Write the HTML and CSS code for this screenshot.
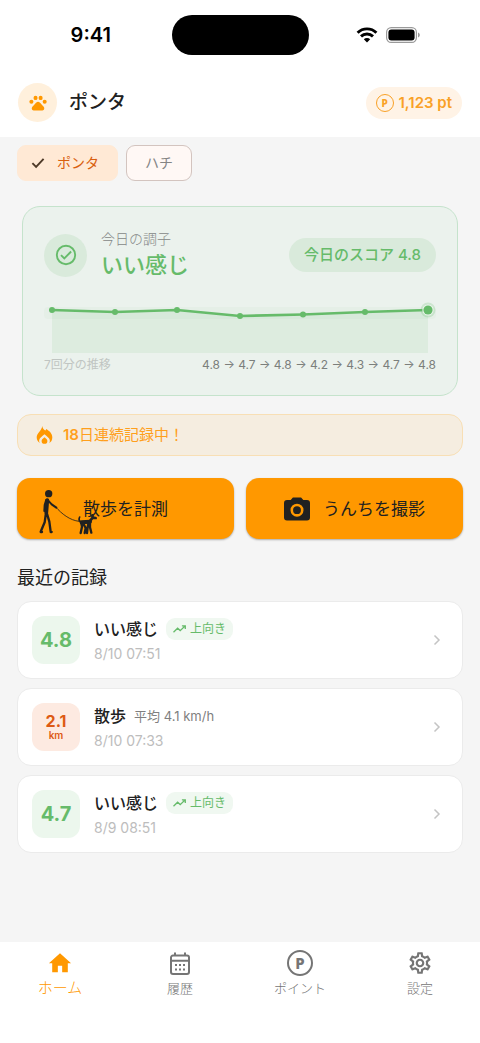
FILE: index.html
```html
<!DOCTYPE html>
<html lang="ja">
<head>
<meta charset="utf-8">
<meta name="viewport" content="width=device-width, initial-scale=1">
<title>ポンタ</title>
<link rel="stylesheet" href="styles.css">
</head>
<body>
<div class="status">
  <span class="status-time">9:41</span>
  <span class="island"></span>
  <span class="status-icons">
    <svg width="22" height="16" viewBox="0 0 22 16" aria-hidden="true">
      <g fill="none" stroke="#000" stroke-width="2.9">
        <path d="M1.6 5.7a13.4 13.4 0 0 1 18.8 0"/>
        <path d="M5 9.4a8.6 8.6 0 0 1 12 0"/>
      </g>
      <path d="M11 15.4l-3.2-3.2a4.6 4.6 0 0 1 6.4 0z"/>
    </svg>
    <svg width="34" height="16" viewBox="0 0 34 16" aria-hidden="true">
      <rect x=".6" y=".6" width="29.8" height="14.8" rx="4.6" fill="none" stroke="#9a9a9a" stroke-width="1.2"/>
      <rect x="2.4" y="2.4" width="26.2" height="11.2" rx="3"/>
      <path d="M32 5.6c2.4.8 2.4 4 0 4.8z" fill="#9a9a9a"/>
    </svg>
  </span>
</div>

<header class="header">
  <span class="avatar">
    <svg width="18" height="18" viewBox="0 0 24 24" fill="#ff9800" aria-hidden="true">
      <ellipse cx="3.2" cy="10.400" rx="2.7" ry="2.7"/><ellipse cx="8.700" cy="5.2" rx="2.7" ry="2.9"/>
      <ellipse cx="15.500" cy="5.2" rx="2.7" ry="2.9"/><ellipse cx="20.900" cy="10.400" rx="2.7" ry="2.7"/>
      <path d="M18 15.200c-1-1.100-1.900-2-2.900-3.100-.5-.6-1.100-1.100-1.800-1.400a3.500 3.500 0 0 0-2.500 0c-.7.3-1.300.8-1.800 1.400-1 1.100-1.900 2-2.900 3.100-1.400 1.400-2.700 2.600-2.400 4.500.3 1.400 1.200 2.300 2.500 2.300h11.600c1.300 0 2.200-.9 2.500-2.300.4-2-.9-3.100-2.300-4.500z"/>
    </svg>
  </span>
  <h1 class="title">ポンタ</h1>
  <a class="points" href="#points"><span class="coin">P</span>1,123 pt</a>
</header>

<main class="main">
  <div class="chips">
    <button class="chip chip-on" type="button" aria-pressed="true">
      <svg width="14" height="12" viewBox="0 0 14 12" fill="none" stroke="#4e3a28" stroke-width="1.900" aria-hidden="true"><path d="M1.400 6.200l3.700 3.700 7.500-8"/></svg>
      ポンタ
    </button>
    <button class="chip" type="button" aria-pressed="false">ハチ</button>
  </div>

  <section class="condition">
    <div class="condition-top">
      <span class="check">
        <svg width="24" height="24" viewBox="0 0 24 24" fill="none" stroke="#66bb6a" stroke-width="1.900" aria-hidden="true"><circle cx="12" cy="12" r="9.200"/><path d="M7 12.200l3.300 3.300 6.800-7"/></svg>
      </span>
      <div class="condition-text">
        <p class="condition-label">今日の調子</p>
        <p class="condition-value">いい感じ</p>
      </div>
      <span class="score">今日のスコア 4.8</span>
    </div>
    <svg class="chart" viewBox="0 0 392 52" role="img" aria-label="7回分の推移">
      <rect x="0" y="6" width="392" height="12" rx="4" fill="#66bb6a" opacity=".04"/>
      <path d="M8 9L71 11 133 9 196 15 259 13.500 321 11 384 9V52H8z" fill="#66bb6a" opacity=".1"/>
      <path d="M8 9L71 11 133 9 196 15 259 13.500 321 11 384 9" fill="none" stroke="#66bb6a" stroke-width="2.600"/>
      <circle cx="384" cy="9" r="7.500" fill="#66bb6a" opacity=".22"/>
      <circle cx="384" cy="9" r="5.600" fill="#ecf5ed"/>
      <g fill="#66bb6a">
        <circle cx="8" cy="9" r="3"/><circle cx="71" cy="11" r="3"/><circle cx="133" cy="9" r="3"/>
        <circle cx="196" cy="15" r="3"/><circle cx="259" cy="13.500" r="3"/><circle cx="321" cy="11" r="3"/>
        <circle cx="384" cy="9" r="4.600"/>
      </g>
    </svg>
    <div class="chart-legend">
      <span class="legend-name">7回分の推移</span>
      <span class="legend-values">4.8 → 4.7 → 4.8 → 4.2 → 4.3 → 4.7 → 4.8</span>
    </div>
  </section>

  <p class="streak">
    <svg width="17" height="18" viewBox="0 0 17 18" aria-hidden="true">
      <path fill="#ff9800" fill-rule="evenodd" d="M6.300 0c.2 2.200 1.400 3.300 3 4.600.5-.5.7-1 .8-1.700 3.600 2 6.200 4.800 6.200 8.400 0 3.200-1.200 4.700-3 5.700.5-.9.7-1.900.5-3-.4-2-2.800-3.700-5.300-5.800-2.600 2.200-4.900 3.800-5.300 5.800-.2 1.200.1 2.200.7 3C2.100 16 .7 14.300.7 11.600.7 7 5.500 5 6.300 0z"/>
      <path fill="#ff9800" d="M8.500 11.200c1.600 1.300 2.900 2.100 2.900 3.700a2.900 2.900 0 0 1-5.800 0c0-1.600 1.300-2.400 2.900-3.700z"/>
    </svg>
    <span><b class="streak-days">18</b>日連続記録中！</span>
  </p>

  <div class="actions">
    <button class="action" type="button">
      <svg class="walker" width="62" height="48" viewBox="25 25 186 144" fill="none" stroke="#212121" stroke-linecap="round" stroke-linejoin="round" aria-hidden="true">
        <circle cx="57" cy="42" r="11" fill="#212121" stroke="none"/>
        <path stroke-width="11" d="M53 61L50 99"/>
        <path stroke-width="6" d="M50 60L45 76 44 94M55 62L66 74 80 84"/>
        <path stroke-width="7" d="M49 99L45 128 33 156M51 99L59 126 63 156M33 157h4M63 157h3"/>
        <path stroke-width="2.500" d="M79 83C96 102 120 122 148 125"/>
        <path stroke-width="12" d="M156 128L181 126"/>
        <path stroke-width="5" d="M153 127C146 122 148 116 150 112"/>
        <path stroke-width="8" d="M180 125L189 114 198 115M189 113l-1-6"/>
        <path stroke-width="7" d="M155 130L157 141 153 160M160 130L168 145 165 160M177 128L174 142 172 160M181 128L181 143 185 159"/>
      </svg>
      散歩を計測
    </button>
    <button class="action" type="button">
      <svg width="26" height="24" viewBox="0 0 26 24" aria-hidden="true">
        <path fill="#212121" d="M8.900 0.500h8.200l2.200 2.500H23a3 3 0 0 1 3 3v14.500a3 3 0 0 1-3 3H3a3 3 0 0 1-3-3V6a3 3 0 0 1 3-3h3.700z"/>
        <circle cx="13" cy="13.200" r="5.200" fill="none" stroke="#ff9800" stroke-width="2.600"/>
      </svg>
      うんちを撮影
    </button>
  </div>

  <h2 class="section-title">最近の記録</h2>
  <div class="records">
    <a class="record" href="#r1">
      <span class="badge">4.8</span>
      <span class="record-body">
        <span class="record-head"><span class="record-name">いい感じ</span>
          <span class="trend"><svg width="13" height="8" viewBox="0 0 13 8" fill="none" stroke="#66bb6a" stroke-width="1.300" aria-hidden="true"><path d="M.5 7.200L4.600 3.200 7.200 5.600 12 1M8.900.8h3.400v3.300"/></svg>上向き</span></span>
        <time class="record-time">8/10 07:51</time>
      </span>
      <svg class="chevron" width="8" height="12" viewBox="0 0 8 12" aria-hidden="true"><path d="M1.500 1.500L6 6 1.500 10.500"/></svg>
    </a>
    <a class="record" href="#r2">
      <span class="badge badge-walk"><span>2.1</span><small class="unit">km</small></span>
      <span class="record-body">
        <span class="record-head"><span class="record-name">散歩</span><span class="pace">平均 4.1 km/h</span></span>
        <time class="record-time">8/10 07:33</time>
      </span>
      <svg class="chevron" width="8" height="12" viewBox="0 0 8 12" aria-hidden="true"><path d="M1.500 1.500L6 6 1.500 10.500"/></svg>
    </a>
    <a class="record" href="#r3">
      <span class="badge">4.7</span>
      <span class="record-body">
        <span class="record-head"><span class="record-name">いい感じ</span>
          <span class="trend"><svg width="13" height="8" viewBox="0 0 13 8" fill="none" stroke="#66bb6a" stroke-width="1.300" aria-hidden="true"><path d="M.5 7.200L4.600 3.200 7.200 5.600 12 1M8.900.8h3.400v3.300"/></svg>上向き</span></span>
        <time class="record-time">8/9 08:51</time>
      </span>
      <svg class="chevron" width="8" height="12" viewBox="0 0 8 12" aria-hidden="true"><path d="M1.500 1.500L6 6 1.500 10.500"/></svg>
    </a>
  </div>
</main>

<nav class="nav">
  <a class="tab tab-on" href="#home" aria-current="page">
    <span class="tab-icon"><svg width="26" height="26" viewBox="0 0 24 24" fill="#ff9800" aria-hidden="true"><path d="M10 20.500v-6h4v6h5.200V12.300h3L12 3 1.800 12.300h3v8.200z"/></svg></span>
    ホーム
  </a>
  <a class="tab" href="#history">
    <span class="tab-icon"><svg width="20" height="23" viewBox="0 0 20 23" aria-hidden="true"><path fill="none" stroke="#757575" stroke-width="2" d="M3 3.500h14a2 2 0 0 1 2 2V20a2 2 0 0 1-2 2H3a2 2 0 0 1-2-2V5.500a2 2 0 0 1 2-2zM1 8.700h18M5 .500v4M15 .500v4"/><path fill="#757575" d="M5 12h2v2H5zM9 12h2v2H9zM13 12h2v2h-2zM5 16.500h2v2H5zM9 16.500h2v2H9zM13 16.500h2v2h-2z"/></svg></span>
    履歴
  </a>
  <a class="tab" href="#points">
    <span class="tab-icon"><span class="coin coin-large">P</span></span>
    ポイント
  </a>
  <a class="tab" href="#settings">
    <span class="tab-icon"><svg width="26" height="26" viewBox="0 0 24 24" fill="#757575" aria-hidden="true"><path d="M19.430 12.980c.04-.32.07-.64.07-.98 0-.34-.03-.66-.07-.98l2.110-1.650c.19-.15.24-.42.12-.64l-2-3.460c-.09-.16-.26-.25-.44-.25-.06 0-.12.01-.17.03l-2.490 1c-.52-.4-1.080-.73-1.690-.98l-.38-2.650A.488.488 0 0 0 14 2h-4c-.25 0-.46.18-.49.42l-.38 2.650c-.61.25-1.170.59-1.690.98l-2.490-1a.566.566 0 0 0-.18-.03c-.17 0-.34.09-.43.25l-2 3.460c-.13.22-.07.49.12.64l2.110 1.650c-.04.32-.07.65-.07.98 0 .33.03.66.07.98l-2.110 1.650c-.19.15-.24.42-.12.64l2 3.460c.09.16.26.25.44.25.06 0 .12-.01.17-.03l2.490-1c.52.4 1.080.73 1.690.98l.38 2.650c.03.24.24.42.49.42h4c.25 0 .46-.18.49-.42l.38-2.650c.61-.25 1.170-.59 1.690-.98l2.490 1c.06.02.12.03.18.03.17 0 .34-.09.43-.25l2-3.460c.12-.22.07-.49-.12-.64l-2.110-1.650zm-1.980-1.710c.04.31.05.52.05.73 0 .21-.02.43-.05.73l-.14 1.130.89.7 1.080.84-.7 1.210-1.270-.51-1.040-.42-.9.680c-.43.32-.84.56-1.250.73l-1.060.43-.16 1.130-.2 1.350h-1.400l-.19-1.350-.16-1.130-1.060-.43c-.43-.18-.83-.41-1.230-.71l-.91-.7-1.060.43-1.270.51-.7-1.210 1.080-.84.89-.7-.14-1.130c-.03-.31-.05-.54-.05-.74s.02-.43.05-.73l.14-1.130-.89-.7-1.080-.84.7-1.210 1.270.51 1.040.42.9-.68c.43-.32.84-.56 1.250-.73l1.060-.43.16-1.130.2-1.350h1.390l.19 1.350.16 1.130 1.060.43c.43.18.83.41 1.230.71l.91.7 1.060-.43 1.270-.51.7 1.210-1.070.85-.89.7.14 1.130zM12 8c-2.210 0-4 1.790-4 4s1.790 4 4 4 4-1.790 4-4-1.790-4-4-4zm0 6c-1.100 0-2-.9-2-2s.9-2 2-2 2 .9 2 2-.9 2-2 2z"/></svg></span>
    設定
  </a>
</nav>
</body>
</html>
```

FILE: styles.css
```css
* { box-sizing: border-box; }

body {
  margin: 0;
  min-height: 100vh;
  display: flex;
  flex-direction: column;
  background: #f5f5f5;
  color: #212121;
  font-family: Inter, "Noto Sans CJK JP", sans-serif;
  font-size: 14px;
  line-height: 20px;
}

h1, h2, p { margin: 0; }
a { color: inherit; text-decoration: none; }
button { font: inherit; color: inherit; cursor: pointer; }
svg { display: block; flex: none; }

.status {
  display: grid;
  grid-template-columns: 1fr auto 1fr;
  align-items: center;
  padding: 15px 0 12px;
  background: #fff;
}
.status-time {
  padding-left: 10px;
  text-align: center;
  font-size: 20px;
  font-weight: 600;
  color: #000;
}
.island { width: 137px; height: 40px; border-radius: 20px; background: #000; }
.status-icons { display: flex; justify-content: center; gap: 8px; padding-right: 12px; }

.header {
  display: flex;
  align-items: center;
  gap: 12px;
  padding: 16px 18px 15px;
  background: #fff;
}
.avatar {
  display: grid;
  place-items: center;
  width: 39px;
  height: 39px;
  border-radius: 50%;
  background: #fff0dc;
}
.title { flex: 1; font-size: 19px; font-weight: 500; line-height: 28px; }
.points {
  display: flex;
  align-items: center;
  gap: 5px;
  padding: 6px 10px;
  border-radius: 16px;
  background: #fff3e6;
  color: #f9a126;
  font-size: 15px;
  font-weight: 600;
}
.coin {
  display: grid;
  place-items: center;
  width: 18px;
  height: 18px;
  border: 1px solid currentColor;
  border-radius: 50%;
  font-family: "Noto Sans", sans-serif;
  font-size: 10px;
  font-weight: 800;
  line-height: 16px;
}
.coin-large { width: 26px; height: 26px; border-width: 2px; font-size: 15px; line-height: 22px; }

.main { flex: 1; padding: 8px 17px 24px; }

.chips { display: flex; gap: 8px; }
.chip {
  display: flex;
  align-items: center;
  gap: 12px;
  height: 36px;
  padding: 0 18px;
  border: 1px solid #d3c4bf;
  border-radius: 9px;
  background: #fff8f5;
  color: #858585;
}
.chip-on {
  padding: 0 18px 0 13px;
  border-color: #ffe9d5;
  background: #ffe9d5;
  color: #d95f0e;
}

.condition {
  margin: 25px 5px 18px;
  padding: 22px 21px;
  border: 1px solid #c5e3cc;
  border-radius: 18px;
  background: #ebf2ed;
}
.condition-top { display: flex; align-items: center; gap: 14px; }
.check {
  display: grid;
  place-items: center;
  width: 43px;
  height: 43px;
  border-radius: 50%;
  background: #d9eadb;
}
.condition-text { flex: 1; }
.condition-label { color: #858887; font-weight: 300; }
.condition-value { color: #66bb6a; font-size: 22px; font-weight: 500; line-height: 32px; }
.score {
  padding: 7px 15px;
  border-radius: 18px;
  background: #d9eadb;
  color: #66bb6a;
  font-size: 15px;
  font-weight: 500;
}
.chart { width: 100%; height: auto; margin: 20px 0 4px; overflow: visible; }
.chart-legend {
  display: flex;
  justify-content: space-between;
  font-size: 12px;
  line-height: 16px;
}
.legend-name { color: #c0c5c2; }
.legend-values { color: #7b7f7c; }

.streak {
  display: flex;
  align-items: center;
  gap: 10px;
  padding: 10px 18px;
  border: 1px solid #f8dfb5;
  border-radius: 14px;
  background: #f5ede0;
  color: #ff9f1c;
  font-size: 15px;
}
.streak-days { font-weight: 600; }

.actions { display: grid; grid-template-columns: 1fr 1fr; gap: 12px; margin: 22px 0 26px; }
.action {
  position: relative;
  display: flex;
  align-items: center;
  justify-content: center;
  gap: 13px;
  height: 61px;
  padding: 0;
  border: 0;
  border-radius: 13px;
  background: #ff9800;
  box-shadow: 0 1px 2px rgba(0, 0, 0, .3);
  font-size: 17px;
}
.walker { position: absolute; left: 21px; top: 10px; }

.section-title { margin-bottom: 10px; font-size: 18px; font-weight: 400; line-height: 26px; }

.records { display: grid; gap: 9px; }
.record {
  display: flex;
  align-items: center;
  gap: 14px;
  padding: 14px;
  border: 1px solid #ebebeb;
  border-radius: 14px;
  background: #fff;
}
.badge {
  display: flex;
  flex-direction: column;
  align-items: center;
  justify-content: center;
  width: 48px;
  height: 48px;
  border-radius: 12px;
  background: #ecf7ed;
  color: #66bb6a;
  font-size: 20px;
  font-weight: 700;
}
.badge-walk { background: #fdeae1; color: #dd5a14; font-size: 16px; line-height: 16px; }
.unit { font-size: 10px; font-weight: 600; line-height: 12px; }
.record-body { flex: 1; display: grid; gap: 3px; }
.record-head { display: flex; align-items: center; gap: 8px; }
.record-name { font-size: 16px; font-weight: 500; line-height: 24px; }
.trend {
  display: flex;
  align-items: center;
  gap: 4px;
  padding: 2px 7px;
  border-radius: 9px;
  background: #f0f8f1;
  color: #66bb6a;
  font-size: 12px;
  line-height: 18px;
}
.pace { color: #7f7f7f; font-size: 13px; }
.record-time { color: #bdbdbd; font-size: 14px; }
.chevron { margin-right: 7px; fill: none; stroke: #c4c4c4; stroke-width: 1.5; }

.nav {
  display: grid;
  grid-template-columns: repeat(4, 1fr);
  height: 101px;
  padding-top: 8px;
  background: #fff;
}
.tab {
  display: flex;
  flex-direction: column;
  align-items: center;
  gap: 2px;
  color: #757575;
  font-size: 13px;
  font-weight: 300;
}
.tab-on { color: #ff9800; font-size: 15px; }
.tab-icon { display: grid; place-items: center; height: 26px; }
```
